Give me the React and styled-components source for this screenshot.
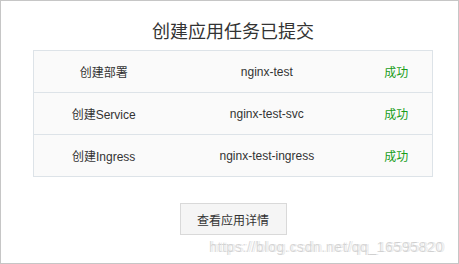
import styled, { createGlobalStyle } from "styled-components";

const GlobalStyle = createGlobalStyle`
  body {
    margin: 0;
    background: #fff;
    font-family: "Liberation Sans", "Noto Sans CJK SC", sans-serif;
  }
`;

// rows of the creation task
const tasks = [
  { step: "创建部署", name: "nginx-test", status: "成功" },
  { step: "创建Service", name: "nginx-test-svc", status: "成功" },
  { step: "创建Ingress", name: "nginx-test-ingress", status: "成功" },
];

const App = () => {
  return (
    <>
      <GlobalStyle />
      <Panel>
        <Title>创建应用任务已提交</Title>
        <Table>
          {tasks.map((task) => (
            <Row key={task.name}>
              <Cell width="140px">{task.step}</Cell>
              <Cell width="188px">{task.name}</Cell>
              <Cell width="72px" success>
                {task.status}
              </Cell>
            </Row>
          ))}
        </Table>
        <DetailButton type="button">查看应用详情</DetailButton>
        <Watermark>https://blog.csdn.net/qq_16595820</Watermark>
      </Panel>
    </>
  );
};

const Panel = styled.div`
  position: relative;
  box-sizing: border-box;
  width: 459px;
  height: 264px;
  border: 1px solid #c6c6c6;
  display: flex;
  flex-direction: column;
  align-items: center;
  padding: 14px 0 0 7px;
`;

const Title = styled.h2`
  margin: 0;
  height: 35px;
  font-size: 18px;
  font-weight: normal;
  color: #333;
  line-height: 35px;
`;

const Table = styled.div`
  width: 400px;
  box-sizing: border-box;
  border: 1px solid #dde3e8;
  background: #fafafa;
`;

const Row = styled.div`
  display: flex;
  height: 41px;
  align-items: center;
  & + & {
    border-top: 1px solid #dde3e8;
  }
`;

const Cell = styled.div`
  width: ${(p) => p.width};
  text-align: center;
  font-size: 12px;
  color: ${(p) => (p.success ? "#1a9e1a" : "#333")};
`;

const DetailButton = styled.button`
  margin-top: 26px;
  width: 107px;
  height: 32px;
  box-sizing: border-box;
  background: #f5f5f5;
  border: 1px solid #d9d9d9;
  font-family: inherit;
  font-size: 12px;
  color: #333;
  padding: 0;
`;

const Watermark = styled.div`
  position: absolute;
  left: 208px;
  top: 238px;
  font-size: 14px;
  letter-spacing: 0.6px;
  color: rgba(180, 180, 180, 0.5);
  text-shadow: 2px 0 0 rgba(200, 200, 200, 0.35);
  white-space: nowrap;
`;

export default App;
